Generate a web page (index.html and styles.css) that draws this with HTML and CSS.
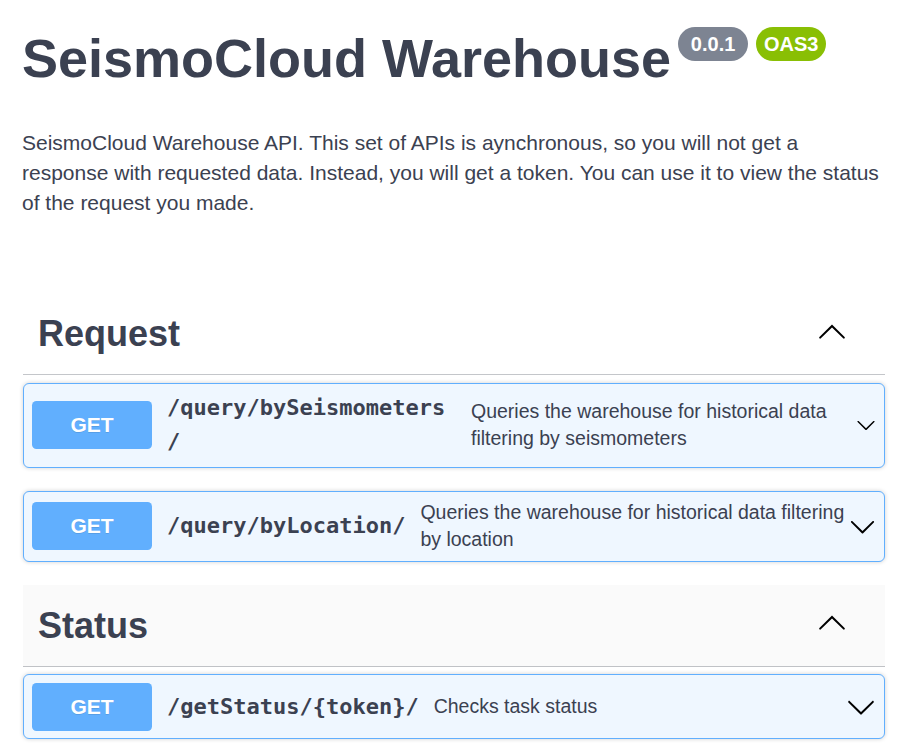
FILE: index.html
```html
<!DOCTYPE html>
<html lang="en">
<head>
<meta charset="utf-8">
<title>SeismoCloud Warehouse</title>
<link rel="stylesheet" href="styles.css">
</head>
<body>
<div class="page">
  <header class="info">
    <div class="title-row">
      <h1 class="title">SeismoCloud Warehouse</h1>
      <div class="badges">
        <span class="badge badge--version">0.0.1</span>
        <span class="badge badge--oas">OAS3</span>
      </div>
    </div>
    <p class="description">SeismoCloud Warehouse API. This set of APIs is aynchronous, so you will not get a response with requested data. Instead, you will get a token. You can use it to view the status of the request you made.</p>
  </header>

  <section class="tag-section">
    <h3 class="tag">
      <span class="tag-name">Request</span>
      <svg class="tag-arrow" viewBox="0 0 20 20" aria-hidden="true"><path d="M17.418 14.908c.271.268.709.268.979 0s.271-.701 0-.969l-7.908-7.83c-.27-.268-.707-.268-.979 0l-7.908 7.830c-.27.268-.27.701 0 .969.271.268.709.268.978 0L10 7.74l7.418 7.168z"/></svg>
    </h3>
    <div class="opblock">
      <span class="method">GET</span>
      <span class="path">/query/bySeismometers/</span>
      <span class="summary">Queries the warehouse for historical data filtering by seismometers</span>
      <svg class="arrow arrow--sm" viewBox="0 0 20 20" aria-hidden="true"><path d="M17.418 6.109c.272-.268.709-.268.979 0s.271.701 0 .969l-7.908 7.83c-.27.268-.707.268-.979 0l-7.908-7.83c-.27-.268-.27-.701 0-.969.271-.268.709-.268.979 0L10 13.25l7.418-7.141z"/></svg>
    </div>
    <div class="opblock">
      <span class="method">GET</span>
      <span class="path">/query/byLocation/</span>
      <span class="summary">Queries the warehouse for historical data filtering by location</span>
      <svg class="arrow arrow--md" viewBox="0 0 20 20" aria-hidden="true"><path d="M17.418 6.109c.272-.268.709-.268.979 0s.271.701 0 .969l-7.908 7.83c-.27.268-.707.268-.979 0l-7.908-7.83c-.27-.268-.27-.701 0-.969.271-.268.709-.268.979 0L10 13.25l7.418-7.141z"/></svg>
    </div>
  </section>

  <section class="tag-section">
    <h3 class="tag tag--hover">
      <span class="tag-name">Status</span>
      <svg class="tag-arrow" viewBox="0 0 20 20" aria-hidden="true"><path d="M17.418 14.908c.271.268.709.268.979 0s.271-.701 0-.969l-7.908-7.83c-.27-.268-.707-.268-.979 0l-7.908 7.83c-.27.268-.27.701 0 .969.271.268.709.268.978 0L10 7.74l7.418 7.168z"/></svg>
    </h3>
    <div class="opblock">
      <span class="method">GET</span>
      <span class="path">/getStatus/{token}/</span>
      <span class="summary">Checks task status</span>
      <svg class="arrow" viewBox="0 0 20 20" aria-hidden="true"><path d="M17.418 6.109c.272-.268.709-.268.979 0s.271.701 0 .969l-7.908 7.83c-.27.268-.707.268-.979 0l-7.908-7.83c-.27-.268-.27-.701 0-.969.271-.268.709-.268.979 0L10 13.25l7.418-7.141z"/></svg>
    </div>
  </section>
</div>
</body>
</html>
```

FILE: styles.css
```css
html, body {
  margin: 0;
  padding: 0;
  background: #ffffff;
}

body {
  font-family: "Liberation Sans", Arial, sans-serif;
  color: #3b4151;
}

.page {
  padding: 27px 21px 0 23px;
}

.info {
  margin-bottom: 75px;
}

.title-row {
  display: flex;
  align-items: flex-start;
}

.title {
  margin: 0;
  font-size: 54px;
  line-height: 62px;
  font-weight: 700;
  color: #3b4151;
  margin-left: -1px;
}

.badges {
  display: flex;
  gap: 8px;
  margin-left: 7px;
}

.badge {
  display: block;
  min-width: 70px;
  box-sizing: border-box;
  text-align: center;
  padding: 5px 7px;
  border-radius: 57px;
  color: #ffffff;
  font-size: 20px;
  line-height: 24px;
  font-weight: 700;
}

.badge--version {
  background: #7d8492;
}

.badge--oas {
  background: #89bf04;
}

.description {
  margin: 39px 0 0 -1px;
  font-size: 21px;
  line-height: 30px;
  color: #3b4151;
}

.tag-section {
  display: flex;
  flex-direction: column;
}

.tag {
  display: flex;
  align-items: center;
  margin: 0 0 7.5px;
  padding: 15px 38px 15px 15px;
  border-bottom: 1px solid rgba(59, 65, 81, 0.3);
  font-size: 36px;
  line-height: 51px;
  font-weight: 700;
  color: #3b4151;
}

.tag--hover {
  background: #fafafa;
}

.tag-name {
  flex: 1 1 auto;
}

.tag-arrow {
  width: 30px;
  height: 30px;
  flex: 0 0 auto;
  margin-top: -6px;
  fill: #000000;
}

.opblock {
  display: flex;
  align-items: center;
  margin: 0 0 23px;
  padding: 7.5px 8px;
  border: 1px solid #61affe;
  border-radius: 6px;
  background: #eff7ff;
  box-shadow: 0 0 4px rgba(0, 0, 0, 0.19);
}

.method {
  flex: 0 0 auto;
  width: 120px;
  height: 48px;
  display: flex;
  align-items: center;
  justify-content: center;
  border-radius: 4.5px;
  background: #61affe;
  color: #ffffff;
  font-size: 21px;
  font-weight: 700;
  text-shadow: 0 1px 0 rgba(0, 0, 0, 0.1);
}

.path {
  flex: 0 1 auto;
  max-width: 289px;
  padding: 0 15px;
  font-family: "DejaVu Sans Mono", "Liberation Mono", monospace;
  font-size: 22px;
  line-height: 34px;
  font-weight: 700;
  color: #3b4151;
  word-break: break-word;
  overflow-wrap: anywhere;
}

.summary {
  flex: 1 1 0;
  min-width: 0;
  font-size: 19.5px;
  line-height: 27px;
  color: #3b4151;
}

.arrow {
  flex: 0 0 auto;
  width: 30px;
  height: 30px;
  fill: #000000;
}

.arrow--md {
  width: 27px;
  height: 27px;
}

.arrow--sm {
  width: 20px;
  height: 20px;
}
```
